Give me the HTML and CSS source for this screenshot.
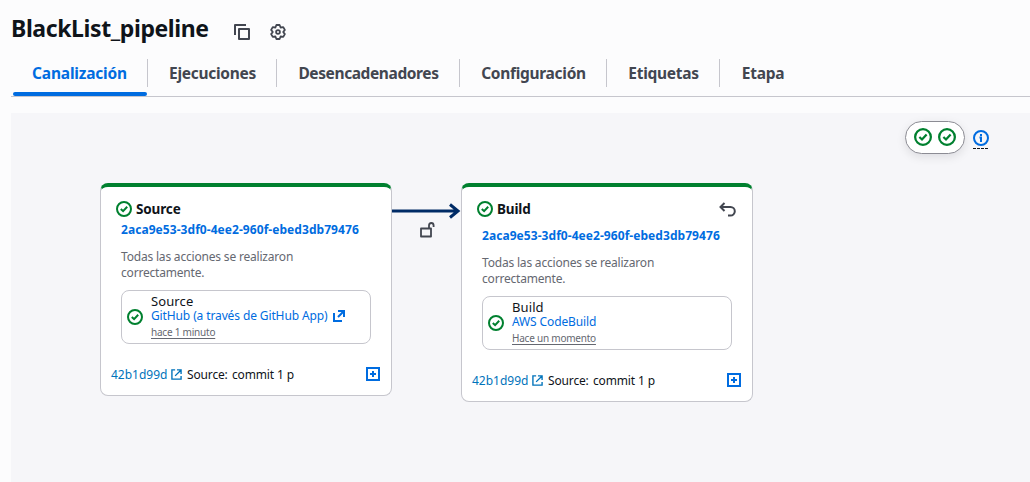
FILE: index.html
```html
<!DOCTYPE html>
<html lang="es">
<head>
<meta charset="utf-8">
<title>BlackList_pipeline</title>
<link rel="stylesheet" href="styles.css">
</head>
<body>
<svg class="defs" width="0" height="0">
  <symbol id="ok" viewBox="0 0 16 16"><circle cx="8" cy="8" r="7"/><path d="M4.8 8l2.3 2.2 4.1-4.4"/></symbol>
  <symbol id="ext" viewBox="0 0 12 12"><path d="M4.500 1H1v10h10V7.500M6.500 1H11v4.500M11 1L4.500 7.500"/></symbol>
  <symbol id="open" viewBox="0 0 12 12"><path d="M1 3v8h8M5 1h6v6M11 1L5 7"/></symbol>
  <symbol id="plus" viewBox="0 0 14 14"><path d="M1 1h12v12H1zM7 4v6M4 7h6"/></symbol>
</svg>
<header class="header">
  <h1 class="title">BlackList_pipeline</h1>
  <svg class="icon copy" width="18" height="18" viewBox="0 0 18 18"><path d="M2 12V2h11M6 6h10v10H6z" stroke-linejoin="round"/></svg>
  <svg class="icon gear" width="16" height="16" viewBox="0 0 16 16"><path d="M6.400 1h3.200l1 2.500 2.660-.4 1.600 2.780L13.200 8l1.660 2.110-1.600 2.780-2.660-.4-1 2.500H6.400l-1-2.500-2.660.4-1.600-2.780L2.800 8 1.140 5.890l1.600-2.780 2.660.4z"/><circle cx="8" cy="8" r="1.900"/></svg>
</header>
<nav class="tabs">
  <a class="tab active">Canalización</a>
  <a class="tab">Ejecuciones</a>
  <a class="tab">Desencadenadores</a>
  <a class="tab">Configuración</a>
  <a class="tab">Etiquetas</a>
  <a class="tab">Etapa</a>
</nav>
<main class="canvas">
  <div class="legend">
    <div class="pill">
      <svg class="ok" width="18" height="18"><use href="#ok"/></svg>
      <svg class="ok" width="18" height="18"><use href="#ok"/></svg>
    </div>
    <span class="info"><svg width="16" height="16" viewBox="0 0 16 16"><circle cx="8" cy="8" r="7"/><path d="M6.500 7.500H8V12M8 4v2"/></svg></span>
  </div>
  <section class="stage source">
    <div class="stage-head">
      <svg class="ok" width="16" height="16"><use href="#ok"/></svg>
      <h2 class="stage-name">Source</h2>
    </div>
    <a class="execution">2aca9e53-3df0-4ee2-960f-ebed3db79476</a>
    <p class="message">Todas las acciones se realizaron<br>correctamente.</p>
    <div class="action">
      <svg class="ok" width="16" height="16"><use href="#ok"/></svg>
      <div class="action-text">
        <div class="action-name">Source</div>
        <div class="provider"><span>GitHub (a través de GitHub App)</span><svg class="open" width="12" height="12"><use href="#open"/></svg></div>
        <div class="when">hace 1 minuto</div>
      </div>
    </div>
    <footer class="stage-foot">
      <a class="commit">42b1d99d</a><svg class="ext" width="11" height="11"><use href="#ext"/></svg>
      <span class="revision">Source:</span><span class="commit-message">commit 1 p</span>
      <svg class="plus" width="14" height="14"><use href="#plus"/></svg>
    </footer>
  </section>
  <svg class="arrow" width="70" height="20" viewBox="0 0 70 20"><path d="M0 10h66M58 3.500l8 6.500-8 6.500"/></svg>
  <svg class="lock" width="16" height="18" viewBox="0 0 16 18"><path d="M2 7.500h10v8H2zM10 7V4.500Q10 2 12.300 2T14.600 4.500V6"/></svg>
  <section class="stage build">
    <div class="stage-head">
      <svg class="ok" width="16" height="16"><use href="#ok"/></svg>
      <h2 class="stage-name">Build</h2>
      <svg class="undo" width="17" height="15" viewBox="0 0 17 15"><path d="M5.500 1L1.500 5l4 4M2 5h9.500a4.300 4.300 0 0 1 0 8.600H9"/></svg>
    </div>
    <a class="execution">2aca9e53-3df0-4ee2-960f-ebed3db79476</a>
    <p class="message">Todas las acciones se realizaron<br>correctamente.</p>
    <div class="action">
      <svg class="ok" width="16" height="16"><use href="#ok"/></svg>
      <div class="action-text">
        <div class="action-name">Build</div>
        <div class="provider"><span>AWS CodeBuild</span></div>
        <div class="when">Hace un momento</div>
      </div>
    </div>
    <footer class="stage-foot">
      <a class="commit">42b1d99d</a><svg class="ext" width="11" height="11"><use href="#ext"/></svg>
      <span class="revision">Source:</span><span class="commit-message">commit 1 p</span>
      <svg class="plus" width="14" height="14"><use href="#plus"/></svg>
    </footer>
  </section>
</main>
</body>
</html>
```
FILE: styles.css
```css
* { box-sizing: border-box; }
body { margin: 0; height: 482px; overflow: hidden; background: #fcfcfd; color: #0f141a; font-family: "Noto Sans", "Open Sans", sans-serif; display: flex; flex-direction: column; padding-left: 11px; }
svg { fill: none; stroke-width: 2; flex: none; display: block; }
.defs { position: absolute; }
.header { height: 57px; display: flex; align-items: center; }
.title { margin: -2px 0 0; width: 222px; font-size: 23px; line-height: 30px; font-weight: 700; letter-spacing: -0.4px; white-space: nowrap; }
.icon { stroke: #424650; margin-top: 7px; }
.gear { margin-left: 19px; stroke-width: 1.800; stroke-linejoin: round; }
.tabs { height: 40px; display: grid; grid-template-columns: 137px 129px 183px 147px 113px 86px; border-bottom: 1px solid #c6c6cd; }
.tab { position: relative; display: flex; justify-content: center; height: 32px; line-height: 32px; font-size: 15.500px; font-weight: 700; color: #424650; white-space: nowrap; letter-spacing: -0.3px; }
.tab:nth-child(3) { letter-spacing: -0.4px; }
.tab:not(:last-child) { background: linear-gradient(#c6c6cd, #c6c6cd) right 2px / 1px 28px no-repeat; }
.tab.active { color: #006ce0; letter-spacing: -0.2px; }
.active::after { content: ""; position: absolute; left: 2px; right: 1px; top: 35px; height: 4px; border-radius: 2px; background: #006ce0; }
.canvas { position: relative; flex: 1; margin-top: 16px; background: #f6f6f9; }
.legend { display: flex; justify-content: flex-end; padding: 8px 41px 0 0; gap: 8px; }
.pill { width: 60px; height: 33px; padding-bottom: 1px; display: flex; align-items: center; justify-content: center; gap: 6px; border: 1px solid #8c8c94; border-radius: 17px; background: #fff; box-shadow: 0 3px 10px rgba(0, 7, 22, 0.1); }
.ok { stroke: #00802f; }
.info { height: 19px; margin-top: 9px; stroke: #006ce0; background: repeating-linear-gradient(90deg, #0f141a 0 3px, transparent 3px 4px) bottom / 100% 1px no-repeat; }
.stage { position: absolute; top: 70px; width: 292px; background: #fff; border: 1px solid #c6c6cd; border-top: 4px solid #00802f; border-radius: 8px; padding: 11px 19px 0 20px; }
.source { left: 89px; height: 213px; }
.build { left: 450px; height: 219px; }
.stage-head { height: 22px; margin-left: -5px; display: flex; align-items: center; gap: 4px; }
.build .stage-head { height: 28px; padding-bottom: 6px; }
.stage-name { margin: 0; font-size: 13.500px; line-height: 20px; font-weight: 700; letter-spacing: -0.15px; }
.undo { stroke: #424650; margin: 1px -3px 0 auto; }
.execution { display: block; height: 20px; line-height: 20px; font-size: 12px; font-weight: 700; letter-spacing: 0.06px; color: #006ce0; white-space: nowrap; }
.message { margin: 9px 0 10px; height: 31px; font-size: 12px; line-height: 15.500px; letter-spacing: -0.19px; color: #656871; white-space: nowrap; }
.action { height: 54px; width: 250px; display: flex; align-items: center; gap: 8px; border: 1px solid #c6c6cd; border-radius: 8px; padding-left: 5px; }
.action-text { white-space: nowrap; }
.action-name { font-size: 13px; line-height: 17px; height: 15px; margin-top: -1px; letter-spacing: 0.1px; }
.provider { display: flex; align-items: center; gap: 5px; font-size: 12px; line-height: 15px; letter-spacing: -0.12px; color: #006ce0; }
.open { stroke: #006ce0; }
.when { height: 17px; line-height: 18px; font-size: 10px; letter-spacing: -0.22px; color: #656871; text-decoration: underline; text-underline-offset: 2px; }
.stage-foot { margin: 19px -5px 0 -10px; height: 22px; display: flex; align-items: center; font-size: 12px; white-space: nowrap; }
.commit { width: 60px; color: #0073bb; }
.ext { stroke: #0073bb; stroke-width: 1.500; margin-right: 5px; }
.revision { width: 45px; letter-spacing: -0.15px; }
.commit-message { letter-spacing: -0.15px; }
.plus { stroke: #006ce0; margin: 0 -3px 0 auto; }
.arrow { position: absolute; left: 381px; top: 88px; stroke: #002b66; stroke-width: 3; }
.lock { position: absolute; left: 408px; top: 108px; stroke: #424650; stroke-width: 1.800; stroke-linejoin: round; }
```
